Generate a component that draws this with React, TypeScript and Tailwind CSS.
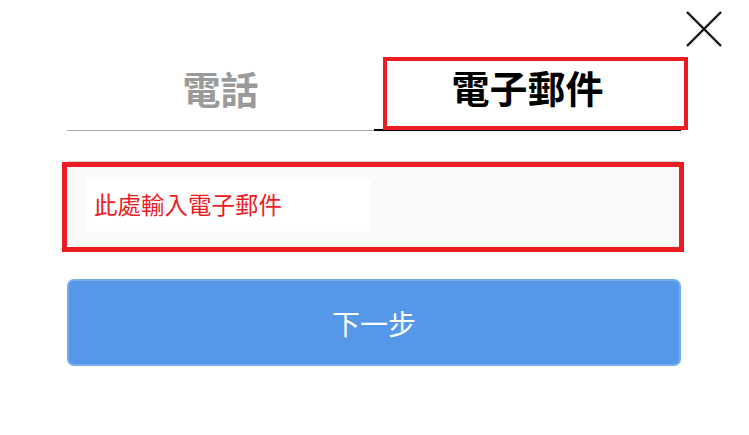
import { useState } from "react"

const font = { fontFamily: '"Noto Sans CJK TC", "Noto Sans", sans-serif' }

export default function App() {
  const [tab, setTab] = useState<"phone" | "email">("email")

  const tabClass = (active: boolean) =>
    `w-full h-[77px] flex items-center justify-center pb-[10px] text-[38px] font-semibold ${
      active ? "border-b-2 border-black text-black" : "border-b border-[#a8a8a8] text-[#9a9a9a]"
    }`

  return (
    <div className="w-[749px] h-[435px] bg-white flex flex-col" style={font}>
      <div className="flex justify-end pt-[10px] pr-[26px]">
        <button className="w-[38px] h-[38px] flex items-center justify-center" aria-label="close">
          <svg width="38" height="38" viewBox="0 0 38 38">
            <path d="M2 2 L36 36 M36 2 L2 36" stroke="#111" strokeWidth="2.4" fill="none" />
          </svg>
        </button>
      </div>

      <div className="pl-[67px] pr-[68px] pt-[6px] flex flex-col">
        {/* tabs */}
        <div className="flex items-end">
          <div className="flex-1">
            <button onClick={() => setTab("phone")} className={tabClass(tab === "phone")}>
              電話
            </button>
          </div>
          <div className="relative flex-1">
            <button onClick={() => setTab("email")} className={tabClass(tab === "email")}>
              電子郵件
            </button>
            <div className="absolute top-[3px] left-[9px] right-[-7px] bottom-[1px] border-4 border-[#ed1c24] pointer-events-none"></div>
          </div>
        </div>

        {/* input */}
        <div className="relative mt-[30px] h-[90px] bg-[#fafafa] border-t border-[#cfcfcf] rounded-[3px] pt-[17px] pl-[19px]">
          <div className="w-[285px] h-[52px] bg-white flex items-center pl-[8px]">
            <span className="text-[23.5px] leading-none text-[#ed1c24]">此處輸入電子郵件</span>
          </div>
          <div className="absolute left-[-5px] top-0 right-[-3px] bottom-[-1px] border-[5px] border-[#ed1c24] pointer-events-none"></div>
        </div>

        {/* next */}
        <button className="mt-[28px] w-full h-[87px] bg-[#5597e9] border-2 border-[#76acef] rounded-[7px] text-white text-[28px] flex items-center justify-center">
          下一步
        </button>
      </div>
    </div>
  )
}
